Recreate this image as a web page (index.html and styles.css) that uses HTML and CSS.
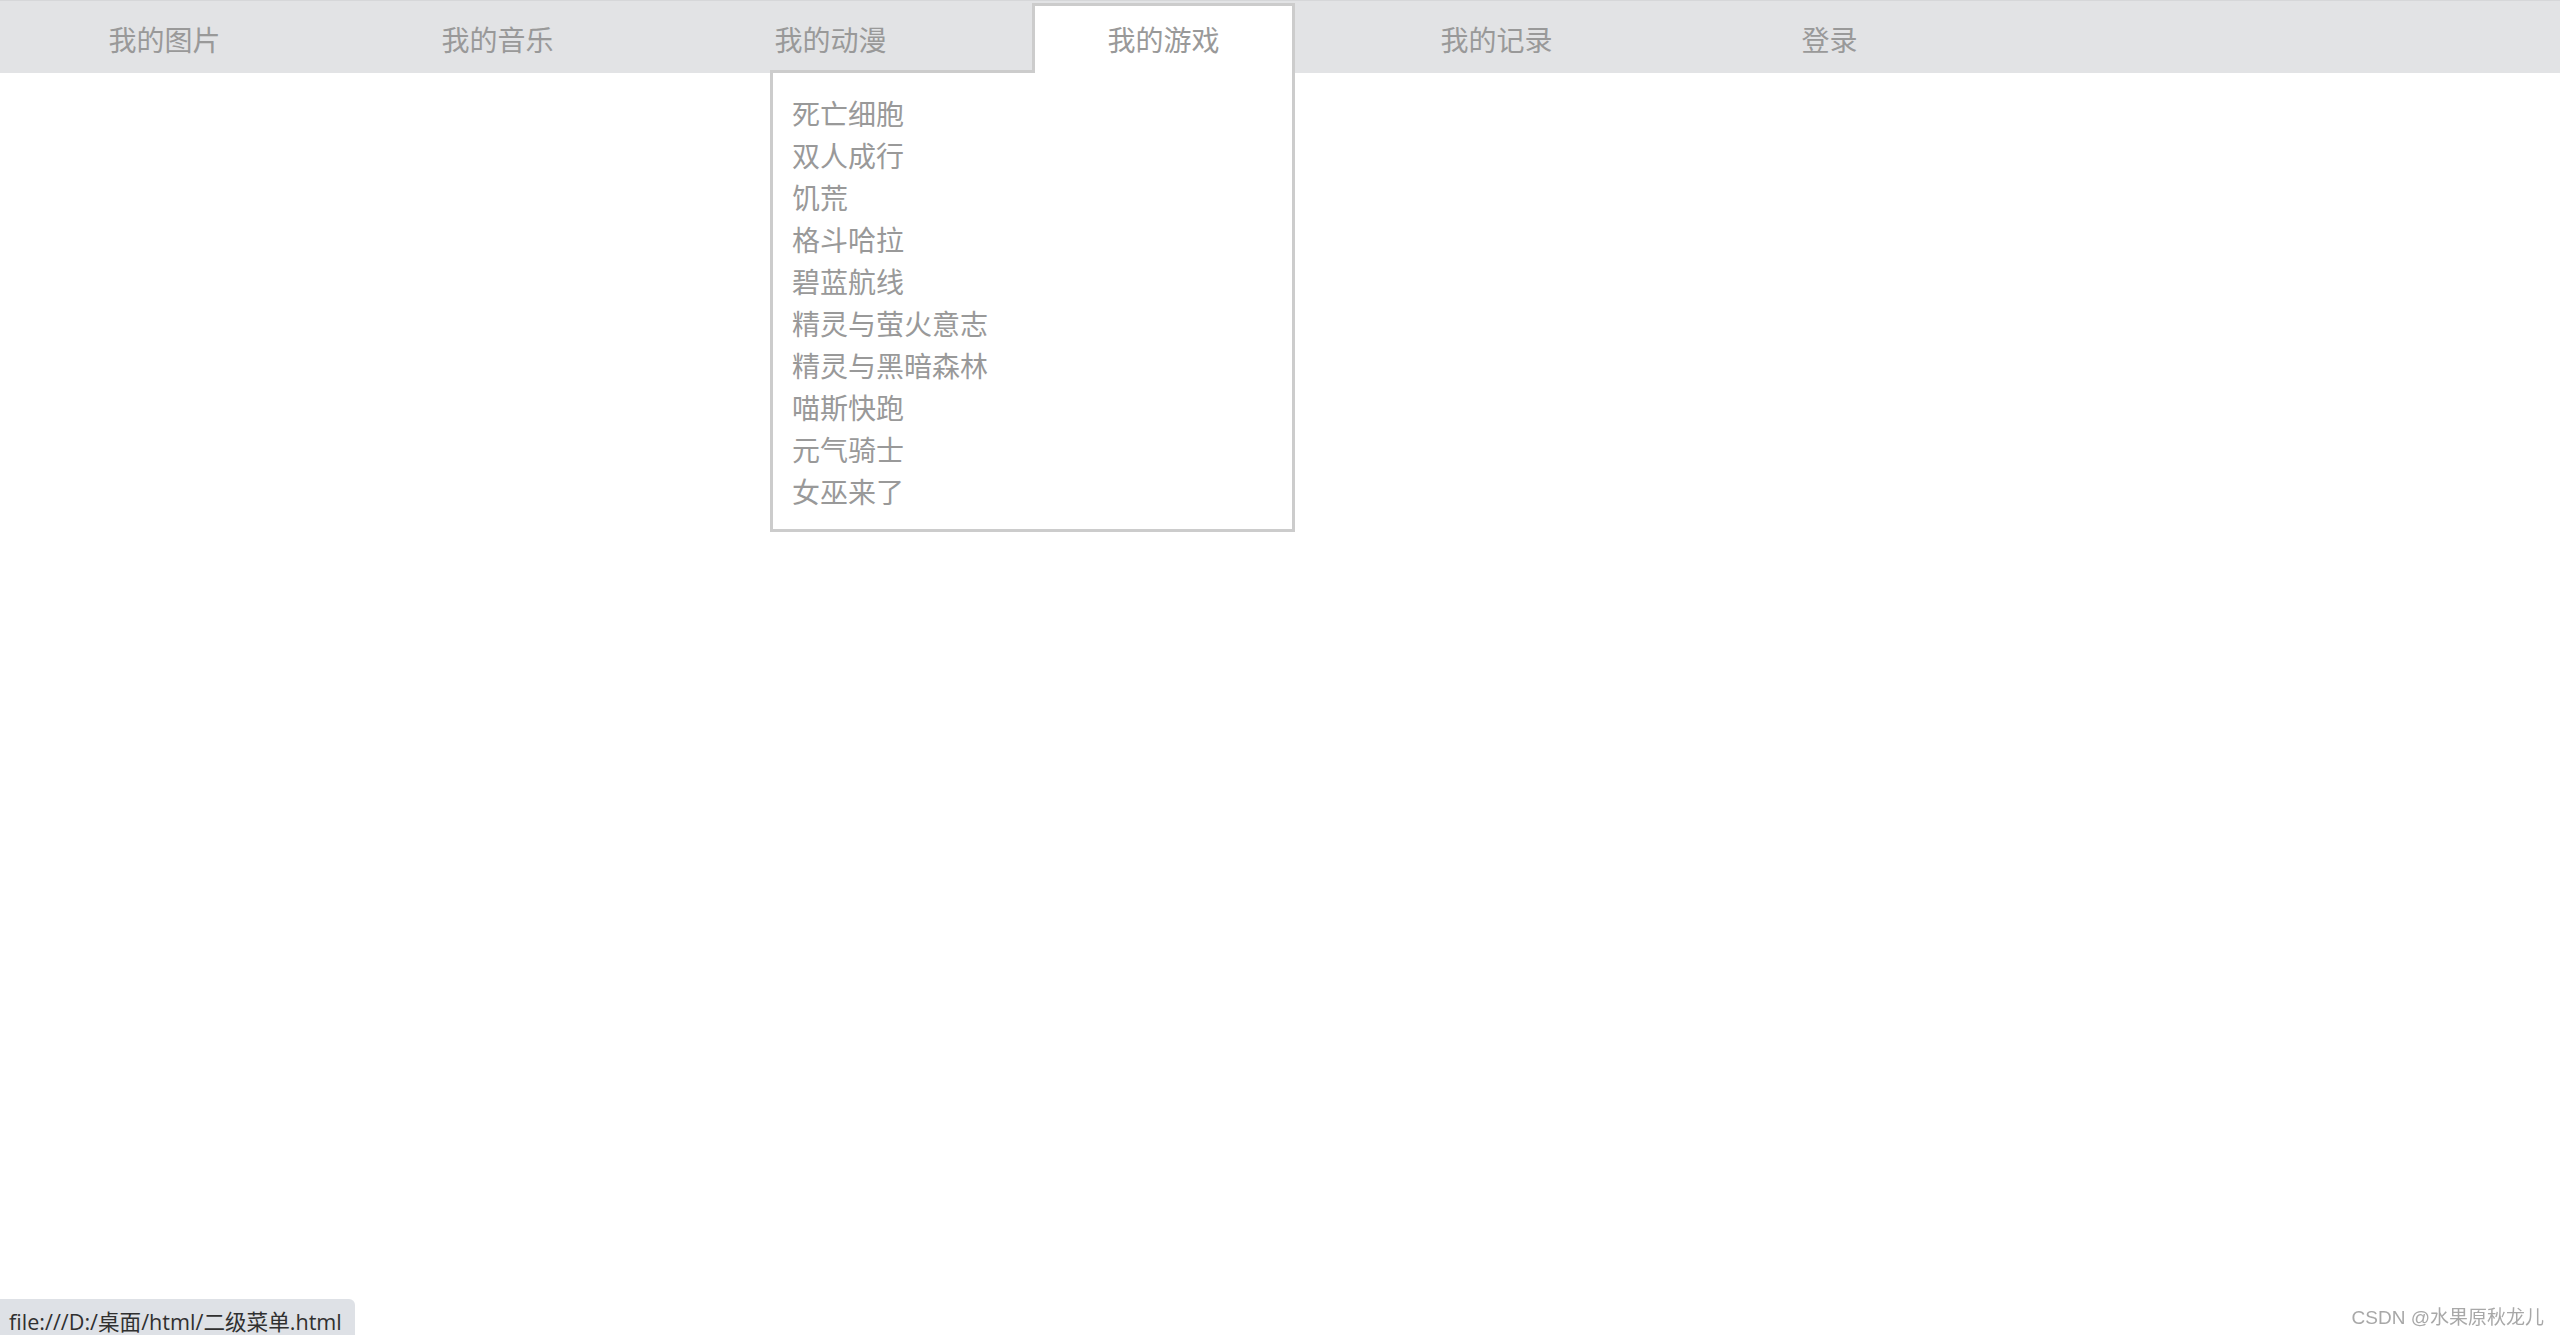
FILE: index.html
```html
<!DOCTYPE html>
<html lang="zh-CN">
<head>
<meta charset="utf-8">
<title>二级菜单</title>
<link rel="stylesheet" href="styles.css">
</head>
<body>
<div class="topline"></div>
<nav class="nav">
  <ul class="menu">
    <li class="item"><a class="tab" href="#">我的图片</a></li>
    <li class="item"><a class="tab" href="#">我的音乐</a></li>
    <li class="item"><a class="tab" href="#">我的动漫</a></li>
    <li class="item open">
      <a class="tab" href="#">我的游戏</a>
      <ul class="sub">
        <li>死亡细胞</li>
        <li>双人成行</li>
        <li>饥荒</li>
        <li>格斗哈拉</li>
        <li>碧蓝航线</li>
        <li>精灵与萤火意志</li>
        <li>精灵与黑暗森林</li>
        <li>喵斯快跑</li>
        <li>元气骑士</li>
        <li>女巫来了</li>
      </ul>
    </li>
    <li class="item"><a class="tab" href="#">我的记录</a></li>
    <li class="item"><a class="tab" href="#">登录</a></li>
  </ul>
</nav>
<div class="status">file:///D:/桌面/html/二级菜单.html</div>
<div class="mark">CSDN @水果原秋龙儿</div>
</body>
</html>
```

FILE: styles.css
```css
html, body {
  margin: 0;
  padding: 0;
  height: 100%;
  background: #ffffff;
  font-family: "Noto Sans CJK SC", "Noto Sans", sans-serif;
}

.topline {
  height: 1px;
  background: #d6d7d9;
}

.nav {
  height: 72px;
  background: #e2e3e5;
}

.menu {
  list-style: none;
  margin: 0;
  padding: 2px 0 0 33px;
  display: flex;
  gap: 70px;
}

.item {
  position: relative;
  width: 263px;
}

.tab {
  position: relative;
  z-index: 1;
  display: block;
  box-sizing: border-box;
  height: 70px;
  border: 3px solid transparent;
  border-bottom: 0;
  text-align: center;
  font-size: 28px;
  line-height: 66px;
  color: #999999;
  text-decoration: none;
}

.open .tab {
  background: #ffffff;
  border-color: #cccccc;
}

.sub {
  position: absolute;
  z-index: 0;
  top: 67px;
  right: 0;
  width: 525px;
  box-sizing: border-box;
  margin: 0;
  padding: 19px 0 17px 19px;
  list-style: none;
  background: #ffffff;
  border: 3px solid #cccccc;
}

.sub li {
  font-size: 28px;
  line-height: 42px;
  color: #999999;
}

.status {
  position: fixed;
  left: 0;
  bottom: 0;
  height: 36px;
  padding: 0 13px 0 9px;
  box-sizing: border-box;
  background: #dee1e6;
  border-top-right-radius: 6px;
  font-family: "Open Sans", "Noto Sans CJK SC", sans-serif;
  font-size: 21.6px;
  line-height: 46px;
  color: #303030;
  overflow: hidden;
}

.mark {
  position: fixed;
  right: 16px;
  bottom: 6px;
  font-family: "Liberation Sans", "Noto Sans CJK SC", sans-serif;
  font-size: 19px;
  color: #a8a8a8;
  text-shadow: 0 0 1px #ffffff;
}
```
